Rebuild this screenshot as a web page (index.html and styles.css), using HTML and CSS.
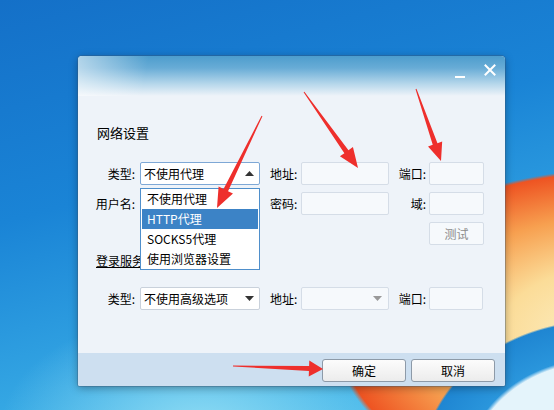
FILE: index.html
```html
<!DOCTYPE html>
<html lang="zh-CN">
<head>
    <meta charset="UTF-8">
    <title>网络设置</title>
    <link rel="stylesheet" href="styles.css">
</head>
<body>
    <div class="desktop">
        <div class="dialog">
            <div class="titlebar">
                <span class="tb-btn">
                    <svg width="20" height="20" viewBox="0 0 20 20"><rect x="5" y="16" width="10" height="2" fill="#fff"/></svg>
                </span>
                <span class="tb-btn">
                    <svg width="20" height="20" viewBox="0 0 20 20"><path d="M5.5 5.5l9 9M14.5 5.5l-9 9" stroke="#fff" stroke-width="2" stroke-linecap="square"/></svg>
                </span>
            </div>

            <div class="content">
                <div class="section">网络设置</div>
                <div class="form">
                    <span class="lbl">类型:</span>
                    <div class="combo open">
                        <span>不使用代理</span>
                        <svg width="9" height="5" viewBox="0 0 9 5"><path d="M0 5L4.5 0L9 5z" fill="#333"/></svg>
                        <ul class="droplist">
                            <li>不使用代理</li>
                            <li class="active">HTTP代理</li>
                            <li>SOCKS5代理</li>
                            <li>使用浏览器设置</li>
                        </ul>
                    </div>
                    <span class="lbl2">地址:</span>
                    <div class="field mid"></div>
                    <span class="lbl3">端口:</span>
                    <div class="field small"></div>

                    <span class="lbl">用户名:</span>
                    <div class="field wide"></div>
                    <span class="lbl2">密码:</span>
                    <div class="field mid"></div>
                    <span class="lbl3">域:</span>
                    <div class="field small"></div>

                    <div class="btn-test">测试</div>
                </div>

                <div class="section under">登录服务器设置</div>
                <div class="form">
                    <span class="lbl">类型:</span>
                    <div class="combo">
                        <span>不使用高级选项</span>
                        <svg width="9" height="5" viewBox="0 0 9 5"><path d="M0 0L4.5 5L9 0z" fill="#333"/></svg>
                    </div>
                    <span class="lbl2">地址:</span>
                    <div class="field mid combo-empty">
                        <svg width="9" height="5" viewBox="0 0 9 5"><path d="M0 0L4.5 5L9 0z" fill="#999"/></svg>
                    </div>
                    <span class="lbl3">端口:</span>
                    <div class="field port2"></div>
                </div>
            </div>

            <div class="footer">
                <button class="btn">确定</button>
                <button class="btn">取消</button>
            </div>
        </div>

        <svg class="arrows" width="554" height="410" viewBox="0 0 554 410">
            <polygon points="261.55,115.78 223.54,188.93 218.6,186.51 217,208 232.98,193.55 228.04,191.13 262.45,116.22"/>
            <polygon points="303.59,92.29 344.38,153.15 339.9,156.33 358,168 352.94,147.07 348.46,150.25 304.41,91.71"/>
            <polygon points="415.53,89.16 432.74,144.82 428.02,146.46 441,161 442.18,141.54 437.46,143.18 416.47,88.84"/>
            <polygon points="232.98,366.5 308.93,371.03 308.74,376.52 323,369 309.28,360.54 309.09,366.03 233.02,365.5"/>
        </svg>
    </div>
</body>
</html>
```

FILE: styles.css
```css
body {
    margin: 0;
    font-family: "Noto Sans CJK SC", "Noto Sans", sans-serif;
    font-size: 12px;
    color: #000;
}

.desktop {
    position: relative;
    width: 554px;
    height: 410px;
    overflow: hidden;
    box-sizing: border-box;
    padding: 56px 0 0 78px;
    background:
        radial-gradient(ellipse 240px 200px at 600px 470px, #e4f4fb 0, #e4f4fb 54%, #2a96dc 56%, #1f86d2 74%, transparent 75%),
        radial-gradient(ellipse 300px 175px at 620px 335px, #fdf2cc 0, #fbdc98 40%, #f7a050 68%, #ee5422 93%, transparent 95%),
        radial-gradient(ellipse 200px 120px at 200px 430px, #8fdcf4 0, rgba(120, 210, 240, 0) 100%),
        linear-gradient(165deg, #1470c8 0%, #1a84d6 40%, #3aaee6 80%, #55c2ee 100%);
}

.dialog {
    width: 427px;
    height: 330px;
    display: flex;
    flex-direction: column;
    background: #eef3f9;
    border-radius: 4px 4px 2px 2px;
    box-shadow: 0 0 0 1px rgba(60, 90, 120, 0.35), 0 2px 8px rgba(0, 0, 0, 0.35);
}

.titlebar {
    height: 40px;
    display: flex;
    justify-content: flex-end;
    gap: 10px;
    padding: 4px 5px 0 0;
    box-sizing: border-box;
    border-radius: 4px 4px 0 0;
    background:
        linear-gradient(100deg, rgba(255, 255, 255, 0.55) 0, rgba(255, 255, 255, 0) 70px),
        linear-gradient(to bottom, #4d9dcd 0, #68acd6 12px, #b6d7eb 28px, #eef3f9 40px);
}

.tb-btn {
    width: 20px;
    height: 20px;
}

.tb-btn svg {
    display: block;
}

.content {
    flex: 1;
    padding-left: 14px;
}

.section {
    line-height: 18px;
    font-size: 13px;
    margin: 28px 0 0 5px;
}

/* partly hidden under the open list, as in the screenshot */
.section.under {
    margin-top: 7px;
    margin-left: 4px;
    font-size: 12px;
    text-decoration: underline;
}

.form {
    display: grid;
    grid-template-columns: 48px 130px 31px 97px 31px 55px;
    grid-auto-rows: 23px;
    row-gap: 7px;
    margin-top: 20px;
    align-items: center;
    white-space: nowrap;
}

.section.under + .form {
    margin-top: 17px;
}

.lbl {
    text-align: right;
    padding-right: 5px;
}

.lbl3 {
    text-align: right;
    padding-right: 3px;
}

.field {
    height: 23px;
    box-sizing: border-box;
    background: #f6f9fc;
    border: 1px solid #d5dde7;
    border-radius: 2px;
}

.field.wide {
    width: 120px;
}

.field.mid {
    width: 88px;
}

.field.small {
    width: 55px;
}

.field.port2 {
    width: 54px;
}

.combo {
    position: relative;
    width: 120px;
    height: 23px;
    box-sizing: border-box;
    display: flex;
    align-items: center;
    justify-content: space-between;
    padding: 0 5px 0 3px;
    background: #fff;
    border: 1px solid #c9d1db;
    border-radius: 2px;
    z-index: 2;
}

.combo.open {
    border-color: #7ea8d6;
}

.combo-empty {
    display: flex;
    align-items: center;
    justify-content: flex-end;
    padding-right: 6px;
}

.droplist {
    position: absolute;
    left: -1px;
    top: 25px;
    width: 120px;
    margin: 0;
    padding: 0;
    list-style: none;
    background: #fff;
    border: 1px solid #4f8fcb;
    box-sizing: border-box;
}

.droplist li {
    height: 20px;
    line-height: 20px;
    padding-left: 5px;
    margin: 0 1px;
}

.droplist li.active {
    background: #3c83c6;
    color: #fff;
}

.btn-test {
    grid-column: 6;
    height: 23px;
    box-sizing: border-box;
    border: 1px solid #d5dde7;
    border-radius: 2px;
    background: #f6f9fc;
    color: #8c8c8c;
    text-align: center;
    line-height: 21px;
}

.footer {
    height: 33px;
    display: flex;
    justify-content: flex-end;
    align-items: flex-start;
    gap: 5px;
    padding: 6px 10px 0 0;
    box-sizing: border-box;
    background: #cddff0;
    border-radius: 0 0 2px 2px;
}

.btn {
    width: 84px;
    height: 23px;
    font-family: inherit;
    font-size: 12px;
    color: #000;
    border: 1px solid #8d9aa8;
    border-radius: 3px;
    background: linear-gradient(to bottom, #fcfcfc, #ececec);
    padding: 0;
}

.arrows {
    position: absolute;
    left: 0;
    top: 0;
    fill: #ee2f2c;
    pointer-events: none;
    z-index: 5;
}
```
